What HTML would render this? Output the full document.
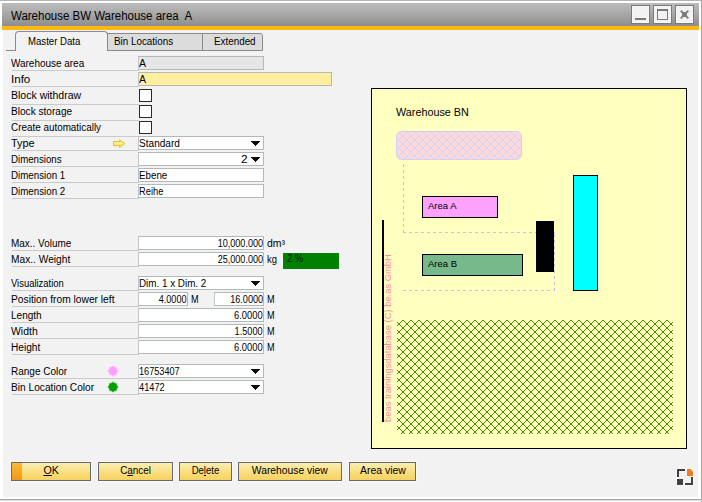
<!DOCTYPE html>
<html><head><meta charset="utf-8"><title>Warehouse BW Warehouse area A</title>
<style>
html,body{margin:0;padding:0}
body{width:702px;height:502px;background:#fff;position:relative;overflow:hidden;font-family:"Liberation Sans",sans-serif;font-size:10px;color:#000}
div{position:absolute;box-sizing:content-box;white-space:nowrap}
#topl{left:0;top:0;width:702px;height:1px;background:#b4b4b4}
#rl{left:701px;top:0;width:1px;height:502px;background:#a8a8a8}
#bl{left:0;top:499px;width:702px;height:1px;background:#a8a8a8}
#bl2{left:0;top:500px;width:702px;height:1px;background:#d8d8d8}
#title{left:2px;top:3px;width:697px;height:23px;background:linear-gradient(#bcbcbc,#b0b0b0 30%,#8e8e8e)}
#title>span{position:absolute;left:8.500px;top:6px;font-size:12px;line-height:15px;white-space:pre}
#orange{left:2px;top:26px;width:697px;height:4px;background:#fbb714}
#content{left:3px;top:30px;width:695px;height:467px;background:#f2f2f2}
.wb{top:5px;width:17px;height:17px;border:1px solid #7a7a7a;background:#f2f2f2;box-shadow:inset 0 0 0 1px #f7f7f7}
.lb>span{margin-left:-1px}
.lb{left:12px;height:15px;line-height:17px;border-bottom:1px solid #cacaca}
.in{height:12px;line-height:13px;border:1px solid #b3b9b9;border-left-color:#c2c6c6;background:#fff;padding:0;text-indent:0.300px;overflow:hidden}
.in.r{text-align:right;text-indent:0}
.in.dis{background:#e6e6e6}
.in.foc{background:#feef9f}
.in.cb.r>span{margin-right:15px}
.ar{position:absolute;right:3px;top:4px}
.ck{left:139px;width:11px;height:11px;border:1px solid #2a2a2a;background:#fff}
.un{height:15px;line-height:17px}
.tl,.tr,.tc{display:inline-block;white-space:pre;text-indent:0}
.tl{transform-origin:0 50%}
.tr{transform-origin:100% 50%}
.tc{transform-origin:50% 50%}
.dflt{left:0;top:0;width:10px;height:17px;background:linear-gradient(#f7bc38,#f29616)}
.tab{top:33px;height:16px;line-height:15px;border:1px solid #8a8a8a;background:#dcdcdc;text-align:left}
.btn{top:462px;height:17px;line-height:16px;border:1px solid #666870;box-shadow:0 0 0 1px rgba(255,255,255,0.550);text-align:center;background:linear-gradient(#fbeeb4,#f9dc7a 60%,#f7d360)}
</style></head><body>
<div id="topl"></div><div id="rl"></div><div id="bl"></div><div id="bl2"></div>
<div id="title"><span><span class="tl" style="transform:scaleX(0.957)">Warehouse BW Warehouse area&nbsp; A</span></span></div>
<div id="orange"></div>
<div class="wb" style="left:631px"><svg width="17" height="17" style="position:absolute;left:0;top:0" shape-rendering="crispEdges"><rect x="3" y="12" width="11" height="2" fill="#7a7a7a"/></svg></div>
<div class="wb" style="left:653px"><svg width="17" height="17" style="position:absolute;left:0;top:0" shape-rendering="crispEdges"><rect x="3.500" y="3.500" width="10" height="10" fill="none" stroke="#7a7a7a"/><rect x="3" y="3" width="11" height="2" fill="#7a7a7a"/></svg></div>
<div class="wb" style="left:675px"><svg width="17" height="17" style="position:absolute;left:0;top:0"><path d="M4.700 4.700L12.300 12.300M12.300 4.700L4.700 12.300" stroke="#7e7e7e" stroke-width="1.900"/><rect x="6" y="6" width="5" height="5" fill="#7c7c7c"/></svg></div>
<div id="content"></div>
<!-- tabs -->
<div style="left:6px;top:50px;width:10px;height:1px;background:#8a8a8a"></div>
<div style="left:15px;top:31px;width:91px;height:19px;border:1px solid #8a8a8a;border-bottom:none;border-radius:4px 4px 0 0;background:#f2f2f2;text-align:left;text-indent:12px;line-height:19px"><span class="tl" style="transform:scaleX(0.960)">Master Data</span></div>
<div class="tab" style="left:107px;width:94px;text-indent:6px"><span class="tl" style="transform:scaleX(0.984)">Bin Locations</span></div>
<div class="tab" style="left:202px;width:59px;border-radius:0 3px 0 0;text-indent:11px"><span class="tl" style="transform:scaleX(0.984)">Extended</span></div>
<div class="lb" style="top:55px;width:127px;height:15px"><span class="tl" style="transform:scaleX(0.995)">Warehouse area</span></div>
<div class="in dis" style="left:138px;top:56px;width:124px"><span class="tl" style="transform:scaleX(1.049)">A</span></div>
<div class="lb" style="top:71px;width:127px;height:15px"><span class="tl" style="transform:scaleX(1.157)">Info</span></div>
<div class="in foc" style="left:138px;top:72px;width:192px"><span class="tl" style="transform:scaleX(1.049)">A</span></div>
<div class="lb" style="top:87px;width:127px;height:17px"><span class="tl" style="transform:scaleX(1.052)">Block withdraw</span></div>
<div class="ck" style="top:89px"></div>
<div class="lb" style="top:103px;width:127px;height:17px"><span class="tl" style="transform:scaleX(1.010)">Block storage</span></div>
<div class="ck" style="top:105px"></div>
<div class="lb" style="top:119px;width:127px;height:17px"><span class="tl" style="transform:scaleX(0.988)">Create automatically</span></div>
<div class="ck" style="top:121px"></div>
<div class="lb" style="top:135px;width:127px;height:15px"><span class="tl" style="transform:scaleX(1.093)">Type</span></div>
<div class="in cb" style="left:138px;top:136px;width:124px"><span class="tl" style="transform:scaleX(1.008)">Standard</span><svg class="ar" width="9" height="5" viewBox="0 0 9 5" shape-rendering="crispEdges"><path d="M0 0h9v1h-1v1h-1v1h-1v1h-1v1h-1v-1h-1v-1h-1v-1h-1v-1h-1z" fill="#0a0a0a"/></svg></div>
<div class="lb" style="top:151px;width:127px;height:15px"><span class="tl" style="transform:scaleX(0.968)">Dimensions</span></div>
<div class="in cb r" style="left:138px;top:152px;width:124px"><span class="tr" style="transform:scaleX(1.187)">2</span><svg class="ar" width="9" height="5" viewBox="0 0 9 5" shape-rendering="crispEdges"><path d="M0 0h9v1h-1v1h-1v1h-1v1h-1v1h-1v-1h-1v-1h-1v-1h-1v-1h-1z" fill="#0a0a0a"/></svg></div>
<div class="lb" style="top:167px;width:127px;height:15px"><span class="tl" style="transform:scaleX(0.975)">Dimension 1</span></div>
<div class="in " style="left:138px;top:168px;width:124px"><span class="tl" style="transform:scaleX(0.978)">Ebene</span></div>
<div class="lb" style="top:183px;width:127px;height:15px"><span class="tl" style="transform:scaleX(0.975)">Dimension 2</span></div>
<div class="in " style="left:138px;top:184px;width:124px"><span class="tl" style="transform:scaleX(0.930)">Reihe</span></div>
<div class="lb" style="top:235px;width:127px;height:15px"><span class="tl" style="transform:scaleX(0.994)">Max.. Volume</span></div>
<div class="in r " style="left:138px;top:236px;width:124px"><span class="tr" style="transform:scaleX(0.907)">10,000.000</span></div>
<div class="un" style="left:267px;top:235px"><span class="tl" style="transform:scaleX(1.044)">dm³</span></div>
<div class="lb" style="top:251px;width:127px;height:15px"><span class="tl" style="transform:scaleX(1.018)">Max.. Weight</span></div>
<div class="in r " style="left:138px;top:252px;width:124px"><span class="tr" style="transform:scaleX(0.907)">25,000.000</span></div>
<div class="un" style="left:267px;top:251px"><span class="tl" style="transform:scaleX(0.947)">kg</span></div>
<div class="lb" style="top:275px;width:127px;height:15px"><span class="tl" style="transform:scaleX(0.943)">Visualization</span></div>
<div class="in cb" style="left:138px;top:276px;width:124px"><span class="tl" style="transform:scaleX(0.985)">Dim. 1 x Dim. 2</span><svg class="ar" width="9" height="5" viewBox="0 0 9 5" shape-rendering="crispEdges"><path d="M0 0h9v1h-1v1h-1v1h-1v1h-1v1h-1v-1h-1v-1h-1v-1h-1v-1h-1z" fill="#0a0a0a"/></svg></div>
<div class="lb" style="top:291px;width:127px;height:15px"><span class="tl" style="transform:scaleX(1.023)">Position from lower left</span></div>
<div class="in r " style="left:138px;top:292px;width:48px"><span class="tr" style="transform:scaleX(0.912)">4.0000</span></div>
<div class="un" style="left:191px;top:291px"><span class="tl" style="transform:scaleX(0.911)">M</span></div>
<div class="in r " style="left:214px;top:292px;width:48px"><span class="tr" style="transform:scaleX(0.913)">16.0000</span></div>
<div class="un" style="left:267px;top:291px"><span class="tl" style="transform:scaleX(0.911)">M</span></div>
<div class="lb" style="top:307px;width:127px;height:15px"><span class="tl" style="transform:scaleX(1.003)">Length</span></div>
<div class="in r " style="left:138px;top:308px;width:124px"><span class="tr" style="transform:scaleX(0.935)">6.0000</span></div>
<div class="un" style="left:267px;top:307px"><span class="tl" style="transform:scaleX(0.911)">M</span></div>
<div class="lb" style="top:323px;width:127px;height:15px"><span class="tl" style="transform:scaleX(1.044)">Width</span></div>
<div class="in r " style="left:138px;top:324px;width:124px"><span class="tr" style="transform:scaleX(0.915)">1.5000</span></div>
<div class="un" style="left:267px;top:323px"><span class="tl" style="transform:scaleX(0.911)">M</span></div>
<div class="lb" style="top:339px;width:127px;height:15px"><span class="tl" style="transform:scaleX(1.014)">Height</span></div>
<div class="in r " style="left:138px;top:340px;width:124px"><span class="tr" style="transform:scaleX(0.935)">6.0000</span></div>
<div class="un" style="left:267px;top:339px"><span class="tl" style="transform:scaleX(0.911)">M</span></div>
<div class="lb" style="top:363px;width:127px;height:15px"><span class="tl" style="transform:scaleX(1.001)">Range Color</span></div>
<div class="in cb" style="left:138px;top:364px;width:124px"><span class="tl" style="transform:scaleX(0.915)">16753407</span><svg class="ar" width="9" height="5" viewBox="0 0 9 5" shape-rendering="crispEdges"><path d="M0 0h9v1h-1v1h-1v1h-1v1h-1v1h-1v-1h-1v-1h-1v-1h-1v-1h-1z" fill="#0a0a0a"/></svg></div>
<div class="lb" style="top:379px;width:127px;height:15px"><span class="tl" style="transform:scaleX(1.017)">Bin Location Color</span></div>
<div class="in cb" style="left:138px;top:380px;width:124px"><span class="tl" style="transform:scaleX(0.924)">41472</span><svg class="ar" width="9" height="5" viewBox="0 0 9 5" shape-rendering="crispEdges"><path d="M0 0h9v1h-1v1h-1v1h-1v1h-1v1h-1v-1h-1v-1h-1v-1h-1v-1h-1z" fill="#0a0a0a"/></svg></div>
<!-- icons -->
<svg style="position:absolute;left:112px;top:138px" width="15" height="11" viewBox="0 0 15 11"><defs><linearGradient id="ag" x1="0" y1="0" x2="0" y2="1"><stop offset="0" stop-color="#f2d63a"/><stop offset="0.450" stop-color="#fff29a"/><stop offset="1" stop-color="#efd028"/></linearGradient></defs><path d="M1.500 3.500H7.500V1.800L13 5.600L7.500 9.400V7.700H1.500Z" fill="url(#ag)" stroke="#e3c528" stroke-width="1" stroke-linejoin="round"/></svg>
<svg style="position:absolute;left:106px;top:364px" width="14" height="30" viewBox="0 0 14 30"><polygon points="7.00,1.50 8.72,2.84 10.89,3.11 11.16,5.28 12.50,7.00 11.16,8.72 10.89,10.89 8.72,11.16 7.00,12.50 5.28,11.16 3.11,10.89 2.84,8.72 1.50,7.00 2.84,5.28 3.11,3.11 5.28,2.84" fill="#ff9eff" stroke="#fbeefb" stroke-width="0.600"/><polygon points="7.00,17.50 8.72,18.84 10.89,19.11 11.16,21.28 12.50,23.00 11.16,24.72 10.89,26.89 8.72,27.16 7.00,28.50 5.28,27.16 3.11,26.89 2.84,24.72 1.50,23.00 2.84,21.28 3.11,19.11 5.28,18.84" fill="#00a000" stroke="#e0f0e0" stroke-width="0.600"/></svg>
<!-- weight bar -->
<div style="left:283px;top:253px;width:56px;height:16px;background:#008000"></div>
<div style="left:283px;top:253px;width:1px;height:16px;background:#e01010"></div>
<div style="left:287px;top:252px;height:14px;line-height:14px;color:#031a03"><span class="tl" style="transform:scaleX(0.928)">2 %</span></div>
<!-- buttons -->
<div class="btn" style="left:11px;width:78px"><div class="dflt"></div><span class="tc" style="transform:scaleX(1.066)"><u>O</u>K</span></div>
<div class="btn" style="left:98px;width:73px"><span class="tc" style="transform:scaleX(0.989)">C<u>a</u>ncel</span></div>
<div class="btn" style="left:179px;width:51px"><span class="tc" style="transform:scaleX(0.955)">De<u>l</u>ete</span></div>
<div class="btn" style="left:238px;width:102px"><span class="tc" style="transform:scaleX(1.032)">Warehouse view</span></div>
<div class="btn" style="left:349px;width:65px"><span class="tc" style="transform:scaleX(1.041)">Area view</span></div>
<!-- panel -->
<svg id="wh" style="position:absolute;left:0;top:0" width="702" height="502" shape-rendering="crispEdges">
<defs>
<pattern id="hg" x="3" y="0" width="8" height="8" patternUnits="userSpaceOnUse"><g fill="#4a8a00"><rect x="0" y="0" width="1" height="1"/><rect x="0" y="7" width="1" height="1"/><rect x="1" y="1" width="1" height="1"/><rect x="1" y="6" width="1" height="1"/><rect x="2" y="2" width="1" height="1"/><rect x="2" y="5" width="1" height="1"/><rect x="3" y="3" width="1" height="1"/><rect x="3" y="4" width="1" height="1"/><rect x="4" y="4" width="1" height="1"/><rect x="4" y="3" width="1" height="1"/><rect x="5" y="5" width="1" height="1"/><rect x="5" y="2" width="1" height="1"/><rect x="6" y="6" width="1" height="1"/><rect x="6" y="1" width="1" height="1"/><rect x="7" y="7" width="1" height="1"/><rect x="7" y="0" width="1" height="1"/></g></pattern>
<pattern id="hp" x="3" y="0" width="8" height="8" patternUnits="userSpaceOnUse"><g fill="#d3d3fb"><rect x="0" y="0" width="1" height="1"/><rect x="0" y="7" width="1" height="1"/><rect x="1" y="1" width="1" height="1"/><rect x="1" y="6" width="1" height="1"/><rect x="2" y="2" width="1" height="1"/><rect x="2" y="5" width="1" height="1"/><rect x="3" y="3" width="1" height="1"/><rect x="3" y="4" width="1" height="1"/><rect x="4" y="4" width="1" height="1"/><rect x="4" y="3" width="1" height="1"/><rect x="5" y="5" width="1" height="1"/><rect x="5" y="2" width="1" height="1"/><rect x="6" y="6" width="1" height="1"/><rect x="6" y="1" width="1" height="1"/><rect x="7" y="7" width="1" height="1"/><rect x="7" y="0" width="1" height="1"/></g></pattern>
</defs>
<rect x="371.5" y="88.5" width="315" height="360" fill="#ffffc0" stroke="#000"/>
<text x="396" y="116" font-size="10.800" font-family="Liberation Sans, sans-serif" fill="#000">Warehouse BN</text>
<rect x="396.5" y="131.500" width="125" height="28" rx="5" ry="5" fill="#ffd9d9" stroke="#d0d0fb" shape-rendering="auto"/>
<rect x="397" y="132" width="124" height="27" rx="5" ry="5" fill="url(#hp)"/>
<path d="M403.500 164V233M403 232.500H555M554.500 234V291M403 290.500H555" fill="none" stroke="#c0c0ff" stroke-dasharray="3 3"/>
<rect x="422.500" y="196.500" width="75" height="21" fill="#ffa2ff" stroke="#000"/>
<text x="428" y="209.400" font-size="9.500" font-family="Liberation Sans, sans-serif">Area A</text>
<rect x="422.500" y="254.500" width="100" height="21" fill="#78b98c" stroke="#000"/>
<text x="428" y="267.300" font-size="9.500" font-family="Liberation Sans, sans-serif">Area B</text>
<rect x="536" y="221" width="18" height="51" fill="#000"/>
<rect x="573.500" y="175.500" width="24" height="115" fill="#00ffff" stroke="#000"/>
<rect x="382" y="220" width="2" height="202" fill="#000"/>
<text transform="translate(391 422) rotate(-90)" font-size="9.400" font-family="Liberation Sans, sans-serif" fill="#ff8aa2">beas trainingsdatabase (C) be.as GmbH</text>
<rect x="397" y="320" width="276" height="114" fill="url(#hg)"/>
</svg>
<!-- resize icon -->
<svg style="position:absolute;left:675px;top:467px" width="20" height="20" viewBox="675 467 20 20">
<g fill="#fafafa"><rect x="676" y="468" width="18" height="18" rx="1"/></g>
<rect x="679" y="471" width="12" height="12" fill="#f2f2f2"/>
<g fill="#414141" shape-rendering="crispEdges"><rect x="677" y="469" width="8" height="2"/><rect x="677" y="469" width="2" height="8"/><rect x="677" y="479" width="6" height="6"/><rect x="685" y="483" width="8" height="2"/><rect x="691" y="477" width="2" height="8"/></g>
<path d="M687 469H690.500L693 471.500V476H687Z" fill="#f47c20"/>
</svg>
</body></html>
